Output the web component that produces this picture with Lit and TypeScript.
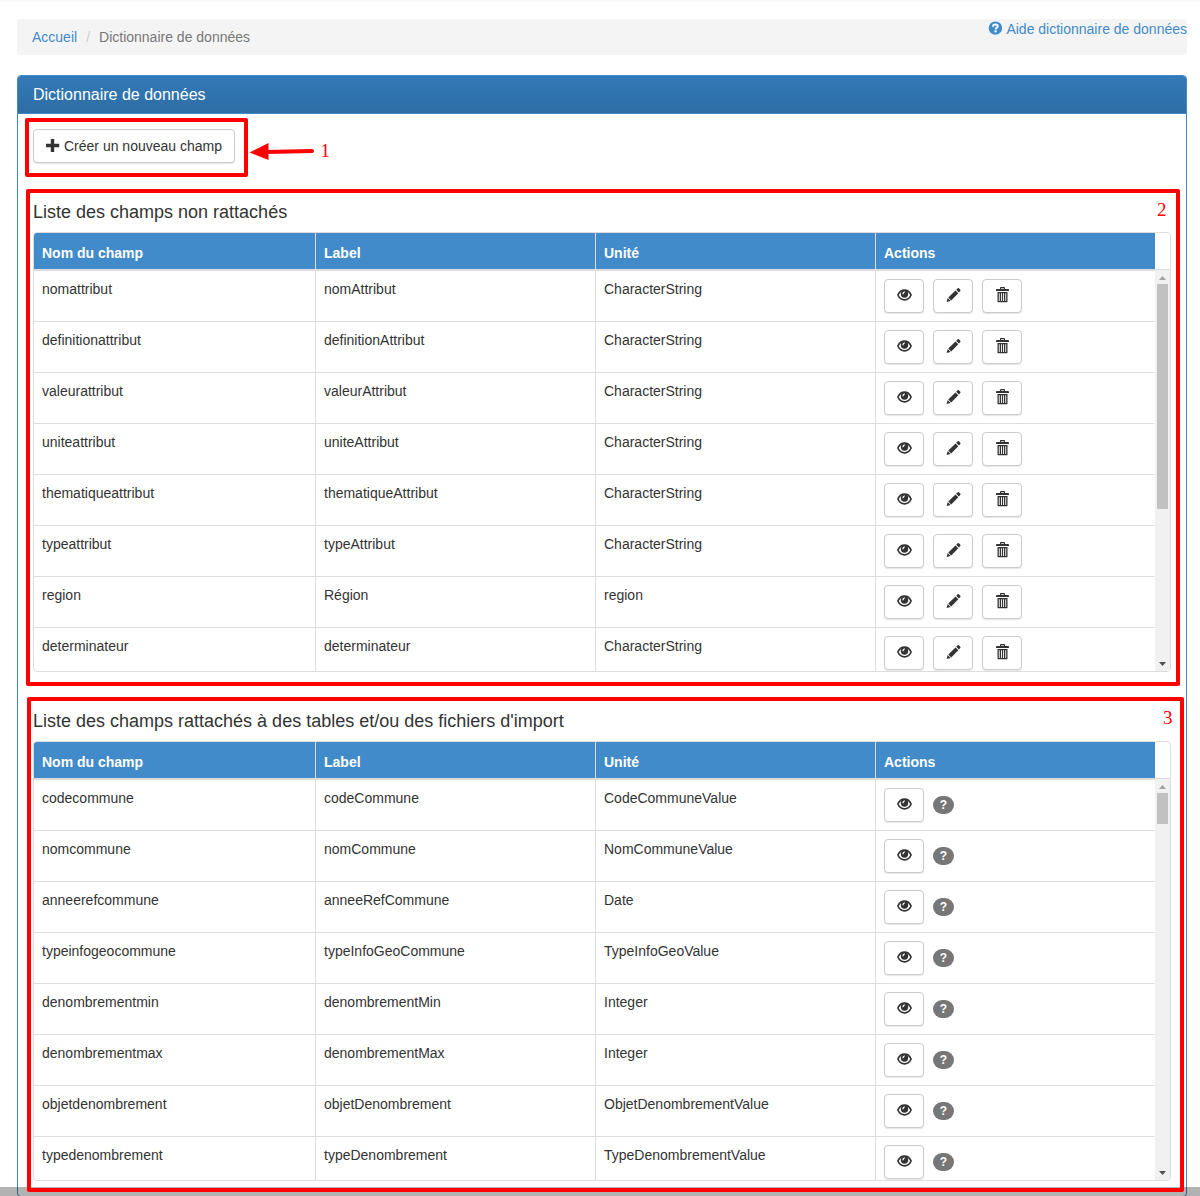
import { LitElement, html, css, svg } from "lit";
import { customElement, property } from "lit/decorators.js";

type Field = [name: string, label: string, unit: string];

const FREE_FIELDS: Field[] = [
  ["nomattribut", "nomAttribut", "CharacterString"],
  ["definitionattribut", "definitionAttribut", "CharacterString"],
  ["valeurattribut", "valeurAttribut", "CharacterString"],
  ["uniteattribut", "uniteAttribut", "CharacterString"],
  ["thematiqueattribut", "thematiqueAttribut", "CharacterString"],
  ["typeattribut", "typeAttribut", "CharacterString"],
  ["region", "Région", "region"],
  ["determinateur", "determinateur", "CharacterString"],
];

const LINKED_FIELDS: Field[] = [
  ["codecommune", "codeCommune", "CodeCommuneValue"],
  ["nomcommune", "nomCommune", "NomCommuneValue"],
  ["anneerefcommune", "anneeRefCommune", "Date"],
  ["typeinfogeocommune", "typeInfoGeoCommune", "TypeInfoGeoValue"],
  ["denombrementmin", "denombrementMin", "Integer"],
  ["denombrementmax", "denombrementMax", "Integer"],
  ["objetdenombrement", "objetDenombrement", "ObjetDenombrementValue"],
  ["typedenombrement", "typeDenombrement", "TypeDenombrementValue"],
];

const ICONS = {
  eye: svg`
    <path d="M.9 8C2.400 4.700 4.700 3.200 7.500 3.200S12.600 4.700 14.100 8C12.600 11.300 10.300 12.800 7.500 12.800S2.400 11.300 .9 8Z" fill="none" stroke="#333" stroke-width="1.700" stroke-linejoin="round"/>
    <circle cx="7.500" cy="7" r="3.700"/>
    <path d="M5.300 7.200Q5.300 4.700 7.600 4.300L8 5.300Q6.500 5.700 6.600 7.200Z" fill="#fff"/>`,
  pencil: svg`
    <path d="M.6 15L1.700 11.100L4.600 14ZM2.300 10.500L9.500 3.400L12.300 6.200L5.200 13.400ZM10.200 2.700L11.700 1.300Q12.300 .800 12.900 1.300L14.300 2.700Q14.800 3.300 14.300 3.900L12.900 5.500Z"/>`,
  trash: svg`
    <g transform="translate(.5 0)"><path fill-rule="evenodd" d="M4.500 2V1Q4.500 .1 5.300 .1H8.700Q9.500 .1 9.500 1V2H12.500Q13.500 2 13.500 3V3.900H.5V3Q.5 2 1.500 2ZM5.600 1.200V2H8.400V1.200ZM2 5H12V14.400Q12 15.300 11 15.300H3Q2 15.300 2 14.400ZM3.300 6.300V13.900H4.200V6.300ZM5.500 6.300V13.900H6.400V6.300ZM7.600 6.300V13.900H8.500V6.300ZM9.800 6.300V13.900H10.700V6.300Z"/></g>`,
};

@customElement("field-table")
export class FieldTable extends LitElement {
  @property({ attribute: false }) rows: Field[] = [];
  @property({ type: Boolean }) editable = false;
  @property({ type: Number }) thumb = 100;

  static styles = css`
    :host { display: block; }
    .frame {
      box-sizing: border-box; height: 440px; border: 1px solid #ddd;
      border-radius: 4px; overflow: hidden; display: flex; flex-direction: column;
    }
    .row { display: grid; grid-template-columns: 282px 280px 280px 1fr; }
    .head { height: 37px; box-sizing: border-box; border-bottom: 1px solid #ddd; padding-right: 15px; }
    .head .cell { background: #428bca; color: #fff; font-weight: bold; padding: 10px 8px 6px; }
    .cell { box-sizing: border-box; padding: 8px; border-right: 1px solid #ddd; }
    .cell:last-child { border-right: 0; }
    .view { display: flex; height: 401px; }
    .rows { flex: 1; overflow: hidden; }
    .rows .row { height: 51px; box-sizing: border-box; border-top: 1px solid #ddd; }
    .actions { display: flex; align-items: center; gap: 9px; }
    .btn {
      box-sizing: border-box; width: 40px; height: 34px; padding: 0; background: #fff;
      border: 1px solid #ccc; border-radius: 4px; color: #333;
      box-shadow: 0 1px 1px rgba(0, 0, 0, 0.1);
      display: flex; align-items: flex-start; justify-content: center;
    }
    .btn svg { fill: #333; display: block; margin-top: 7px; }
    .badge {
      width: 21px; height: 18px; border-radius: 9px; background: #777; color: #fff;
      font: bold 12px/18px "Liberation Sans", Arial, sans-serif; text-align: center;
    }
    .bar {
      width: 15px; background: #f1f1f1; display: flex; flex-direction: column;
      align-items: center;
    }
    .arrow { height: 14px; width: 15px; display: block; flex: none; }
    .thumb { width: 11px; background: #c1c1c1; flex: none; }
    .rest { flex: 1; }
  `;

  private button(icon: keyof typeof ICONS, title: string) {
    return html`<button class="btn" aria-label=${title}>
      <svg width="15" height="16" viewBox="0 0 15 16">${ICONS[icon]}</svg>
    </button>`;
  }

  render() {
    return html`
      <div class="frame">
        <div class="row head">
          ${["Nom du champ", "Label", "Unité", "Actions"].map((t) => html`<div class="cell">${t}</div>`)}
        </div>
        <div class="view">
          <div class="rows">
            ${this.rows.map(
              ([name, label, unit]) => html`<div class="row">
                <div class="cell">${name}</div>
                <div class="cell">${label}</div>
                <div class="cell">${unit}</div>
                <div class="cell actions">
                  ${this.button("eye", "Voir")}
                  ${this.editable
                    ? html`${this.button("pencil", "Modifier")}${this.button("trash", "Supprimer")}`
                    : html`<span class="badge">?</span>`}
                </div>
              </div>`
            )}
          </div>
          <div class="bar">
            <svg class="arrow" viewBox="0 0 15 14"><path fill="#a3a3a3" d="M4 10L7.500 6L11 10Z"/></svg>
            <div class="thumb" style="height:${this.thumb}px"></div>
            <div class="rest"></div>
            <svg class="arrow" viewBox="0 0 15 14"><path fill="#505050" d="M4 5L7.500 9L11 5Z"/></svg>
          </div>
        </div>
      </div>
    `;
  }
}

@customElement("app-root")
export class AppRoot extends LitElement {
  static styles = css`
    :host {
      display: block; position: relative; height: 1196px; overflow: hidden; background: #fff;
      font: 14px/20px "Liberation Sans", Arial, sans-serif; color: #333;
    }
    .page { padding: 17px 13px 0 17px; border-top: 2px solid #f8f8f8; }
    .crumbs {
      display: flex; box-sizing: border-box; height: 36px; padding: 8px 0 8px 15px;
      background: #f4f4f4; border-radius: 4px; color: #777; margin-bottom: 20px;
    }
    .link { color: #428bca; text-decoration: none; }
    .slash { color: #ccc; margin: 0 9px; }
    .help { margin: -8px 0 0 auto; display: flex; gap: 4px; }
    .help svg { margin-top: 2px; }
    .panel {
      border: 1px solid #428bca; border-radius: 4px; background: #fff;
      box-shadow: 0 1px 2px rgba(0, 0, 0, 0.05);
    }
    .title {
      height: 37px; border-bottom: 1px solid #428bca; padding: 0 15px;
      font-size: 16px; line-height: 37px; color: #fff; border-radius: 3px 3px 0 0;
      background: linear-gradient(#337ab7, #2e6da4);
    }
    .body { padding: 15px; }
    .create {
      display: flex; align-items: flex-start; gap: 4px; box-sizing: border-box;
      width: 202px; height: 34px; padding: 6px 12px; background: #fff; border: 1px solid #ccc;
      border-radius: 4px; font: inherit; color: #333; white-space: nowrap;
      box-shadow: 0 1px 1px rgba(0, 0, 0, 0.1);
    }
    .create svg { margin-top: 3px; fill: #333; flex: none; }
    .subtitle { margin: 39px 0 10px; font-size: 18px; line-height: 20px; font-weight: normal; }
    .hbar { position: absolute; left: 0; right: 0; top: 1187px; height: 9px; background: rgba(0, 0, 0, 0.3); }
    .marks { position: absolute; left: 0; top: 0; }
    .marks rect { fill: none; stroke: #f00; stroke-width: 4; stroke-linejoin: round; }
    .marks text { fill: #f00; font: 19px "Liberation Serif", "Times New Roman", serif; }
  `;

  render() {
    return html`
      <div class="page">
        <nav class="crumbs">
          <a class="link">Accueil</a><span class="slash">/</span><span>Dictionnaire de données</span>
          <a class="link help">
            <svg width="14" height="14" viewBox="0 0 14 14">
              <circle cx="7.400" cy="7.100" r="6.700" fill="#428bca"/>
              <path d="M5 5.800Q5 3.500 7.400 3.500Q9.700 3.500 9.700 5.300Q9.700 6.300 8.500 7Q7.600 7.500 7.600 8.500" fill="none" stroke="#fff" stroke-width="1.900"/>
              <rect x="6.500" y="9.400" width="2.100" height="2" fill="#fff"/>
            </svg>
            <span>Aide dictionnaire de données</span>
          </a>
        </nav>
        <section class="panel">
          <div class="title">Dictionnaire de données</div>
          <div class="body">
            <button class="create">
              <svg width="14" height="14" viewBox="0 0 14 14"><path d="M4.800 0H8.200V4.800H13.200V8.200H8.200V13H4.800V8.200H0V4.800H4.800Z"/></svg>
              <span>Créer un nouveau champ</span>
            </button>
            <h4 class="subtitle">Liste des champs non rattachés</h4>
            <field-table .rows=${FREE_FIELDS} editable .thumb=${225}></field-table>
            <h4 class="subtitle">Liste des champs rattachés à des tables et/ou des fichiers d'import</h4>
            <field-table .rows=${LINKED_FIELDS} .thumb=${31}></field-table>
          </div>
        </section>
      </div>
      <div class="hbar"></div>
      <svg class="marks" width="1200" height="1196">
        <rect x="27" y="120" width="219" height="55"/>
        <rect x="28" y="191" width="1150" height="493"/>
        <rect x="29" y="699" width="1153" height="491"/>
        <path d="M249.500 152.500L268.500 143V160Z" fill="#f00"/>
        <path d="M266 152L312 151" stroke="#f00" stroke-width="4" stroke-linecap="round"/>
        <text x="320.500" y="157">1</text>
        <text x="1157" y="216">2</text>
        <text x="1163" y="724">3</text>
      </svg>
    `;
  }
}
